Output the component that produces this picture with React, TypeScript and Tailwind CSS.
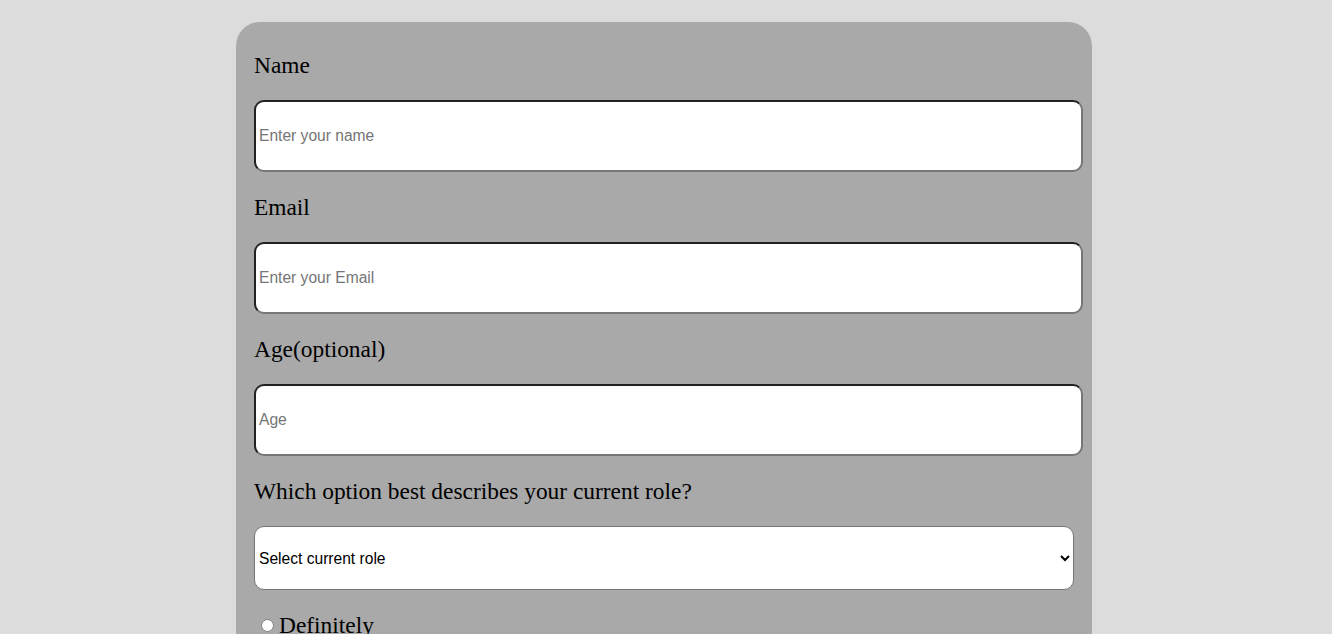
import { useState } from 'react'

function Field({ label, placeholder, type }: { label: string; placeholder: string; type: string }) {
  return (
    <>
      <label className="block text-[23.4px] leading-[26px] mt-[22px]">{label}</label>
      <input
        type={type}
        placeholder={placeholder}
        className="block mt-[22px] w-[829px] h-[72px] bg-white border-2 [border-style:inset] border-[#767676] rounded-[10px] px-[3px] text-[15.6px] text-black placeholder:text-[#757575] [font-family:'Liberation_Sans',Arial,sans-serif] outline-none"
      />
    </>
  )
}

export default function App() {
  const [choice, setChoice] = useState('')
  const answers = ['Definitely', 'Maybe', 'Not sure']

  return (
    <div className="min-h-screen bg-[#dcdcdc] pt-[22px] [font-family:'Liberation_Serif','Times_New_Roman',serif] text-black">
      <form className="w-[856px] ml-[236px] bg-[#a9a9a9] rounded-[24px] pl-[18px] pr-[9px] pt-[8px] pb-[30px]">
        <Field label="Name" placeholder="Enter your name" type="text" />
        <Field label="Email" placeholder="Enter your Email" type="email" />
        <Field label="Age(optional)" placeholder="Age" type="number" />

        <label className="block text-[23.4px] leading-[26px] mt-[22px]">Which option best describes your current role?</label>
        <select
          defaultValue=""
          className="block mt-[22px] w-[820px] h-[64px] bg-white border border-[#767676] rounded-[10px] pl-0 text-[15.6px] [font-family:'Liberation_Sans',Arial,sans-serif] appearance-auto"
        >
          <option value="" disabled>Select current role</option>
          <option>Student</option>
          <option>Full time job</option>
          <option>Full time learner</option>
          <option>Prefer not to say</option>
          <option>Other</option>
        </select>

        <div className="mt-[22px]">
          {answers.map((a) => (
            <label key={a} className="flex items-center text-[23.4px] leading-[26px]">
              <input
                type="radio"
                name="recommend"
                checked={choice === a}
                onChange={() => setChoice(a)}
                className="ml-[7px] mr-[5px] w-[13px] h-[13px] appearance-auto"
              />
              {a}
            </label>
          ))}
        </div>
      </form>
    </div>
  )
}
